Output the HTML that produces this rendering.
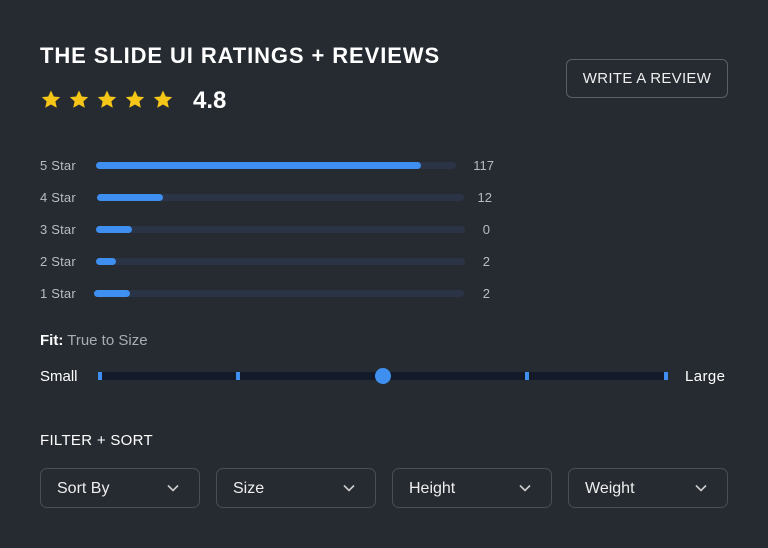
<!DOCTYPE html>
<html><head><style>
*{margin:0;padding:0;box-sizing:border-box}
body{width:768px;height:548px;background:#262b31;font-family:"Liberation Sans",sans-serif;color:#fff;position:relative;overflow:hidden}
.a{position:absolute}
.t{left:40px;top:43px;font-size:22px;font-weight:bold;letter-spacing:0.9px}
.btn{left:566px;top:59px;width:162px;height:39px;border:1px solid #5a5f66;border-radius:6px;font-size:15px;text-align:center;line-height:37px;color:#eee;letter-spacing:0.3px}
.lbl{left:40px;font-size:13px;color:#b8bcc2;letter-spacing:0.2px}
.tr{height:7px;border-radius:4px;background:#2b3346}
.fl{height:7px;border-radius:4px;background:#3f8ff0}
.num{font-size:13px;color:#b8bcc2;text-align:right;width:40px}
.dd{top:468px;width:160px;height:40px;border:1px solid #4a4f56;border-radius:7px;font-size:16px;line-height:40px;padding-left:16px;color:#eee}
.dd svg{position:absolute;right:20px;top:15px}
.tick{width:4px;height:8px;background:#3f8ff0;top:372px}
</style></head><body>
<div class="a t">THE SLIDE UI RATINGS + REVIEWS</div>
<div class="a btn">WRITE A REVIEW</div>
<svg class="a" style="left:40px;top:89px" width="140" height="22" viewBox="0 0 140 22">
<g fill="#f5c518">
<path id="s" d="M11 1.5l2.8 6 6.4.6-4.8 4.3 1.4 6.4-5.8-3.3-5.8 3.3 1.4-6.4-4.8-4.3 6.4-.6z"/>
<use href="#s" x="28"/><use href="#s" x="56"/><use href="#s" x="84"/><use href="#s" x="112"/>
</g></svg>
<div class="a" style="left:193px;top:87px;font-size:24px;font-weight:bold">4.8</div>

<div class="a lbl" style="top:158px">5 Star</div>
<div class="a tr" style="left:96px;top:162px;width:360px"></div><div class="a fl" style="left:96px;top:162px;width:325px"></div>
<div class="a num" style="left:454px;top:158px">117</div>
<div class="a lbl" style="top:190px">4 Star</div>
<div class="a tr" style="left:97px;top:194px;width:367px"></div><div class="a fl" style="left:97px;top:194px;width:66px"></div>
<div class="a num" style="left:452px;top:190px">12</div>
<div class="a lbl" style="top:222px">3 Star</div>
<div class="a tr" style="left:96px;top:226px;width:369px"></div><div class="a fl" style="left:96px;top:226px;width:36px"></div>
<div class="a num" style="left:450px;top:222px">0</div>
<div class="a lbl" style="top:254px">2 Star</div>
<div class="a tr" style="left:96px;top:258px;width:369px"></div><div class="a fl" style="left:96px;top:258px;width:20px"></div>
<div class="a num" style="left:450px;top:254px">2</div>
<div class="a lbl" style="top:286px">1 Star</div>
<div class="a tr" style="left:94px;top:290px;width:370px"></div><div class="a fl" style="left:94px;top:290px;width:36px"></div>
<div class="a num" style="left:450px;top:286px">2</div>

<div class="a" style="left:40px;top:332px;font-size:15px;color:#a9adb3"><b style="color:#fff">Fit:</b> True to Size</div>
<div class="a" style="left:40px;top:368px;font-size:15px">Small</div>
<div class="a" style="left:685px;top:368px;font-size:15px;letter-spacing:0.4px">Large</div>
<div class="a" style="left:100px;top:372px;width:568px;height:8px;background:#131a29"></div>
<div class="a tick" style="left:98px"></div><div class="a tick" style="left:236px"></div>
<div class="a tick" style="left:525px"></div><div class="a tick" style="left:664px"></div>
<div class="a" style="left:375px;top:368px;width:16px;height:16px;border-radius:50%;background:#3f8ff0"></div>

<div class="a" style="left:40px;top:432px;font-size:15px;letter-spacing:0.3px">FILTER + SORT</div>
<div class="a dd" style="left:40px">Sort By<svg width="12" height="8" viewBox="0 0 12 8"><path d="M1 1.5l5 5 5-5" stroke="#ccc" stroke-width="1.6" fill="none"/></svg></div>
<div class="a dd" style="left:216px">Size<svg width="12" height="8" viewBox="0 0 12 8"><path d="M1 1.5l5 5 5-5" stroke="#ccc" stroke-width="1.6" fill="none"/></svg></div>
<div class="a dd" style="left:392px">Height<svg width="12" height="8" viewBox="0 0 12 8"><path d="M1 1.5l5 5 5-5" stroke="#ccc" stroke-width="1.6" fill="none"/></svg></div>
<div class="a dd" style="left:568px">Weight<svg width="12" height="8" viewBox="0 0 12 8"><path d="M1 1.5l5 5 5-5" stroke="#ccc" stroke-width="1.6" fill="none"/></svg></div>
</body></html>
